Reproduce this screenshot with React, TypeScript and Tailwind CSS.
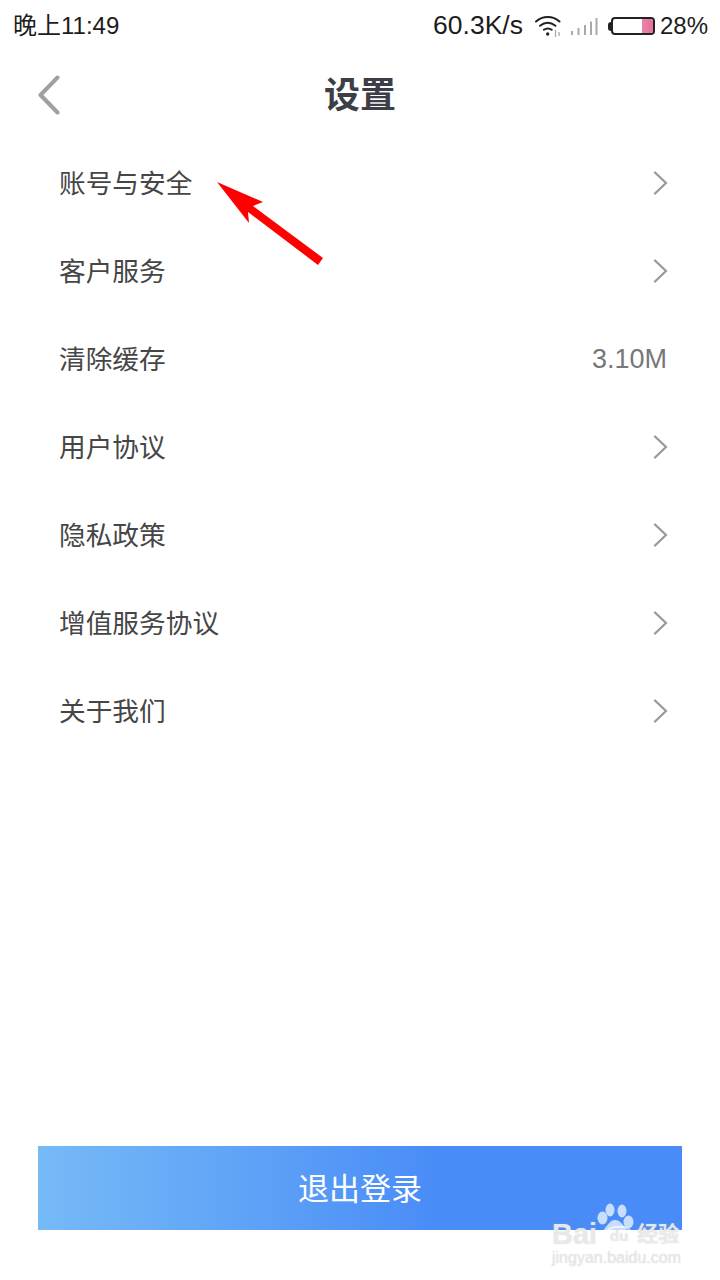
import React from "react";

const cjk = "font-['Liberation_Sans','Noto_Sans_CJK_SC',sans-serif]";

const rows = [
  { label: "账号与安全" },
  { label: "客户服务" },
  { label: "清除缓存", value: "3.10M" },
  { label: "用户协议" },
  { label: "隐私政策" },
  { label: "增值服务协议" },
  { label: "关于我们" },
];

function Chevron() {
  return (
    <svg width="16" height="26" viewBox="0 0 16 26" fill="none" className="shrink-0 -mr-[2px]">
      <path d="M2 2.500l11 10.500L2 23.500" stroke="#9a9a9a" strokeWidth="2.400" strokeLinecap="round" strokeLinejoin="round" />
    </svg>
  );
}

function WifiIcon() {
  return (
    <svg width="27" height="21" viewBox="0 0 27 21" fill="none" className="shrink-0">
      <path d="M1 5.500C7.500 -0.500 18 -0.500 24.500 5.500" stroke="#222" strokeWidth="2" strokeLinecap="round" />
      <path d="M5 9.800c4.800-3.800 10.500-3.800 15.500 0" stroke="#222" strokeWidth="2" strokeLinecap="round" />
      <path d="M8.800 13.800c2.600-1.800 5.400-1.800 8 0" stroke="#222" strokeWidth="2" strokeLinecap="round" />
      <circle cx="12.700" cy="18" r="1.700" fill="#222" />
      <path d="M20.500 14v7M24 16v4" stroke="#aaa" strokeWidth="1.300" />
    </svg>
  );
}

function SignalIcon() {
  return (
    <svg width="27" height="19" viewBox="0 0 27 19" fill="none" className="shrink-0">
      <path d="M1 18v-4M7.500 18v-7M14 18V8M20 18V4.500M25.500 18V1" stroke="#a9a9a9" strokeWidth="2" />
    </svg>
  );
}

function BatteryIcon() {
  return (
    <div className="flex items-center shrink-0">
      <div className="w-[3px] h-[9px] bg-[#222] rounded-l-sm" />
      <div className="w-[44px] h-[18px] border-2 border-[#222] rounded-[4px] flex justify-end overflow-hidden bg-white">
        <div className="w-[11px] bg-gradient-to-r from-[#e884ac] to-[#e56f9b]" />
      </div>
    </div>
  );
}

function Arrow() {
  return (
    <svg width="720" height="300" viewBox="0 0 720 300" className="absolute left-0 top-0 pointer-events-none">
      <polygon
        points="217,182 263,202 253,206 323,258 318,265 248,212 249,223"
        fill="#ff0000"
      />
    </svg>
  );
}

function Watermark() {
  return (
    <div className="absolute left-[552px] top-[1203px] w-[132px] h-[64px] pointer-events-none">
      <svg width="40" height="44" viewBox="0 0 40 44" className="absolute left-[45px] top-0" fill="#ffffff" fillOpacity="0.7">
        <ellipse cx="5.500" cy="15" rx="5" ry="6.500" />
        <ellipse cx="13" cy="7" rx="4.500" ry="6.500" />
        <ellipse cx="25" cy="8" rx="4.500" ry="6.500" />
        <ellipse cx="31.500" cy="19" rx="5" ry="6.500" />
        <path d="M18 17c-5 0-7 5-10 8-3 4-1 11 4 11h13c5 0 6-7 4-11-3-3-6-8-11-8z" />
      </svg>
      <div className="absolute left-0 top-[17px] flex items-center h-[28px] font-bold text-white/60 [text-shadow:0_0_1px_#c8c8c8] font-['Liberation_Sans','Noto_Sans_CJK_SC',sans-serif]">
        <span className="text-[29px] leading-[28px]">Bai</span>
        <span className="ml-[8px] w-[28px] h-[20px] mt-[4px] flex items-center justify-center rounded-[10px] border-2 border-white/60 text-[15px] leading-[16px]">du</span>
        <span className="ml-[4px] text-[21px] leading-[28px]">经验</span>
      </div>
      <div className="absolute left-0 top-[46px] text-[16px] leading-[18px] text-white/60 [text-shadow:0_0_1px_#c0c0c0] font-['Liberation_Sans',sans-serif]">
        jingyan.baidu.com
      </div>
    </div>
  );
}

export default function App() {
  return (
    <div className={`relative w-[720px] h-[1280px] bg-white overflow-hidden flex flex-col ${cjk}`}>
      {/* Status bar */}
      <div className="h-[52px] flex items-center justify-between pl-[13px] pr-[12px] text-[24px] text-[#1c1c1c]">
        <span>晚上11:49</span>
        <div className="flex items-center">
          <span className="text-[26.500px]">60.3K/s</span>
          <div className="ml-[12px]"><WifiIcon /></div>
          <div className="ml-[9px]"><SignalIcon /></div>
          <div className="ml-[10px]"><BatteryIcon /></div>
          <span className="ml-[5px]">28%</span>
        </div>
      </div>

      {/* Title bar */}
      <div className="relative h-[87px] flex items-center justify-center">
        <svg width="24" height="40" viewBox="0 0 24 40" fill="none" className="absolute left-[37px] top-[23px]">
          <path d="M20.500 2.500L3.500 20l17 17.500" stroke="#a0a0a0" strokeWidth="4" strokeLinecap="round" strokeLinejoin="round" />
        </svg>
        <h1 className="text-[36px] leading-none font-bold text-[#3c3e48]">设置</h1>
      </div>

      {/* Settings list */}
      <div className="flex flex-col">
        {rows.map((row) => (
          <div key={row.label} className="h-[88px] flex items-center justify-between pl-[59px] pr-[53px]">
            <span className="pt-[2px] text-[26.700px] text-[#464646]">{row.label}</span>
            {row.value ? (
              <span className="text-[27px] text-[#777777]">{row.value}</span>
            ) : (
              <Chevron />
            )}
          </div>
        ))}
      </div>

      {/* Logout */}
      <div className="mt-auto mb-[50px] mx-[38px] h-[84px] flex items-center justify-center bg-gradient-to-r from-[#76baf6] to-[#4a8cf7] to-[62%]">
        <span className="pt-[4px] text-[31px] text-white">退出登录</span>
      </div>

      <Arrow />
      <Watermark />
    </div>
  );
}
